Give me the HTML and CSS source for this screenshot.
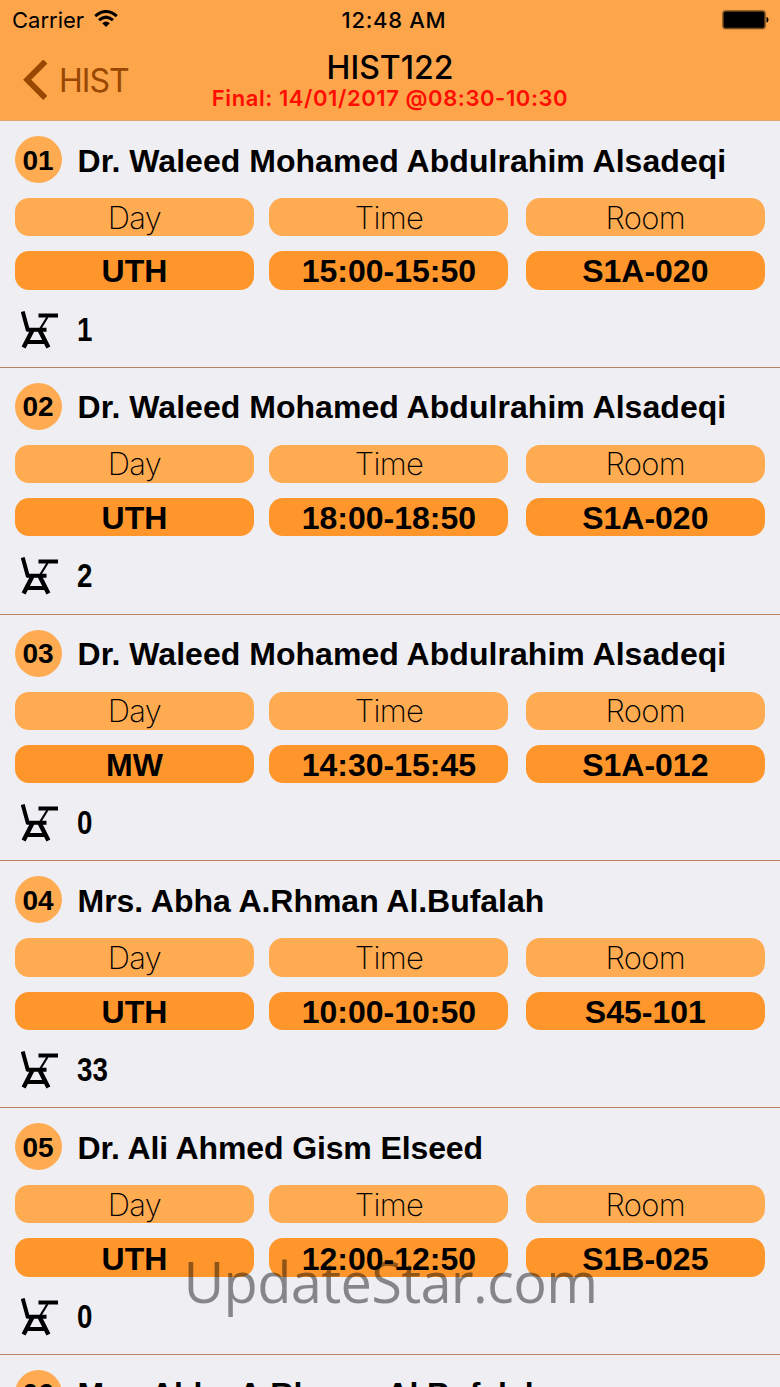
FILE: index.html
```
<!DOCTYPE html>
<html lang="en">
<head>
<meta charset="utf-8">
<title>HIST122</title>
<link rel="stylesheet" href="styles.css">
</head>
<body>
<svg class="defs" aria-hidden="true">
  <symbol id="desk" viewBox="0 0 38 38">
    <path d="M1.700 0.500 6.900 19.500M5.500 18.800H25.500M17.500 4.600H37" fill="none" stroke="#000" stroke-width="4"/>
    <path d="M26.500 6 18.500 19" fill="none" stroke="#000" stroke-width="2.200"/>
    <path d="M11.300 19.500 2.600 36.500M18.800 19.500 27.400 36.500" fill="none" stroke="#000" stroke-width="4.400"/>
    <path d="M7 31H23" fill="none" stroke="#000" stroke-width="4"/>
  </symbol>
</svg>
<div class="screen">
  <header class="header">
    <div class="status">
      <div class="carrier"><span>Carrier</span>
        <svg class="wifi" viewBox="0 0 24 18"><g fill="none" stroke="#000" stroke-width="3"><path d="M1.200 6.200Q12-3.200 22.800 6.200"/><path d="M5 10.200Q12 4 19 10.200"/></g><path d="M8.200 13.200Q12 10 15.800 13.200L12 17Z"/></svg>
      </div>
      <div class="clock">12:48 AM</div>
      <svg class="battery" viewBox="0 0 48 20"><rect x="1" y="1" width="42" height="17.500" rx="2.800" stroke="#764b1e" stroke-width="1.500"/><path d="M44.500 7Q46.500 7 46.500 9.700T44.500 12.500Z"/></svg>
    </div>
    <nav class="nav">
      <div class="back"><svg class="chevron" viewBox="0 0 24 40"><path d="M22.300 1.500 4.200 19.700 22.300 38" fill="none" stroke="#984800" stroke-width="5.800"/></svg><span>HIST</span></div>
      <div class="titles"><div class="title">HIST122</div><div class="final">Final: 14/01/2017 @08:30-10:30</div></div>
    </nav>
  </header>
  <main class="list" id="list"></main>
  <div class="watermark">UpdateStar.com</div>
</div>
<script src="app.js"></script>
</body>
</html>
```

FILE: styles.css
```
* { box-sizing: border-box; }
body { margin: 0; background: #efeef3; color: #000; }
.defs { position: absolute; width: 0; height: 0; }
.screen { position: relative; width: 780px; height: 1387px; overflow: hidden; background: #efeef3; font-family: "Liberation Sans", Arial, sans-serif; }
.header { height: 121px; background: #fda54b; border-bottom: 1px solid #d9a56c; font-family: Inter, sans-serif; }
.status { height: 40px; padding: 0 10px 0 12px; display: grid; grid-template-columns: 1fr auto 1fr; align-items: center; font-size: 22px; }
.carrier { display: flex; align-items: center; gap: 10px; letter-spacing: 0; }
.wifi { width: 24px; height: 18px; margin-top: -2px; }
.clock { font-weight: 500; font-size: 22px; letter-spacing: 0.700px; padding-left: 6px; }
.battery { width: 48px; height: 20px; justify-self: end; }
.nav { height: 80px; display: grid; grid-template-columns: 190px 400px 190px; }
.back { display: flex; align-items: center; gap: 12px; padding-left: 23px; color: #984800; font-size: 32px; font-weight: 400; letter-spacing: -1px; }
.chevron { width: 24px; height: 40px; }
.titles { text-align: center; padding-top: 8px; white-space: nowrap; }
.title { font-size: 32px; font-weight: 500; line-height: 40px; letter-spacing: 0; }
.final { color: #ff0d00; font-size: 22px; font-weight: 600; line-height: 22px; margin-top: -1px; letter-spacing: 0.580px; }
.row { height: 246.800px; padding: 15px 15px 0; border-bottom: 1px solid #b98263; }
.head { display: flex; align-items: center; gap: 16px; height: 47px; }
.badge { width: 47px; height: 47px; border-radius: 50%; background: #feab52; display: grid; place-items: center; font-size: 28px; font-weight: 700; padding: 2px 1px 0 0; }
.name { font-size: 32px; font-weight: 700; white-space: nowrap; line-height: 47px; padding-top: 3px; letter-spacing: 0.040px; margin-left: -0.500px; }
.row:nth-child(4) .name, .row:nth-child(6) .name { letter-spacing: -0.030px; }
.row:nth-child(5) .name { letter-spacing: -0.120px; }
.grid { display: grid; grid-template-columns: 239px 241px 239px; column-gap: 15.400px; row-gap: 15px; margin-top: 15px; }
.cell { width: 239px; height: 38.300px; border-radius: 14px; display: flex; align-items: center; justify-content: center; white-space: nowrap; }
.label { background: #feab52; font-family: Inter, sans-serif; font-weight: 200; font-size: 31px; letter-spacing: -0.700px; }
.value { background: #ff962b; font-weight: 700; font-size: 32px; padding-top: 3px; }
.seats { display: flex; align-items: center; height: 38px; margin-top: 21px; padding-left: 6px; gap: 18px; }
.desk { width: 38px; height: 38px; }
.count { font-size: 33px; font-weight: 700; transform: scaleX(.84); transform-origin: left; }
.watermark { position: absolute; left: 183.500px; top: 1246px; font-family: "Open Sans", sans-serif; font-weight: 400; font-size: 56px; line-height: 70px; letter-spacing: -0.700px; white-space: nowrap; color: rgba(0,0,0,.44); }
```

FILE: app.js
```
const sections = [
  ["01", "Dr. Waleed Mohamed Abdulrahim Alsadeqi", "UTH", "15:00-15:50", "S1A-020", "1"],
  ["02", "Dr. Waleed Mohamed Abdulrahim Alsadeqi", "UTH", "18:00-18:50", "S1A-020", "2"],
  ["03", "Dr. Waleed Mohamed Abdulrahim Alsadeqi", "MW", "14:30-15:45", "S1A-012", "0"],
  ["04", "Mrs. Abha A.Rhman Al.Bufalah", "UTH", "10:00-10:50", "S45-101", "33"],
  ["05", "Dr. Ali Ahmed Gism Elseed", "UTH", "12:00-12:50", "S1B-025", "0"],
  ["06", "Mrs. Abha A.Rhman Al.Bufalah", "", "", "", ""]
];
document.getElementById("list").innerHTML = sections.map(([no, name, day, time, room, seats]) => `
  <section class="row">
    <div class="head"><div class="badge"><span>${no}</span></div><div class="name">${name}</div></div>
    ${day ? `<div class="grid">
      <div class="cell label">Day</div><div class="cell label">Time</div><div class="cell label">Room</div>
      <div class="cell value">${day}</div><div class="cell value">${time}</div><div class="cell value">${room}</div>
    </div>
    <div class="seats"><svg class="desk"><use href="#desk"/></svg><span class="count">${seats}</span></div>` : ""}
  </section>`).join("");
```
